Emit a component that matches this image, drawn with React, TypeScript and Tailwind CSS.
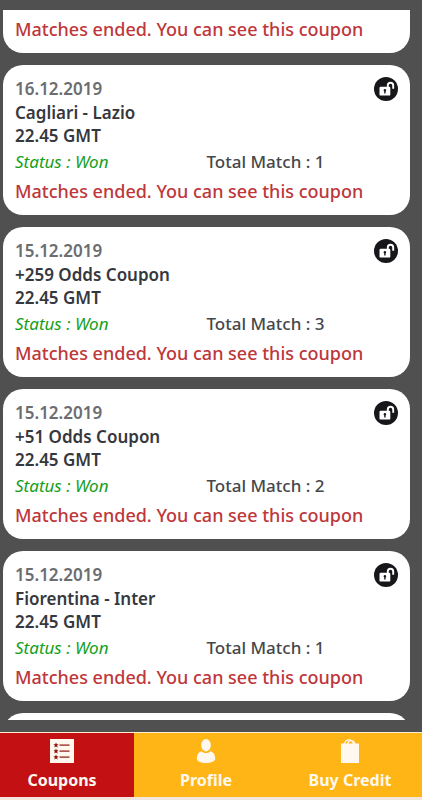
const coupons = [
  { id: 1, date: '16.12.2019', title: 'Cagliari - Lazio', time: '22.45 GMT', total: 1 },
  { id: 2, date: '15.12.2019', title: '+259 Odds Coupon', time: '22.45 GMT', total: 3 },
  { id: 3, date: '15.12.2019', title: '+51 Odds Coupon', time: '22.45 GMT', total: 2 },
  { id: 4, date: '15.12.2019', title: 'Fiorentina - Inter', time: '22.45 GMT', total: 1 },
]

const tabs = [
  { label: 'Coupons', icon: ListIcon, active: true },
  { label: 'Profile', icon: UserIcon, active: false },
  { label: 'Buy Credit', icon: BagIcon, active: false },
]

function ListIcon() {
  return (
    <svg viewBox="0 0 24 24" className="h-6 w-6" aria-hidden="true">
      <path fill="#fff8ee" d="M0 0h24v24H0z" />
      {[6, 12, 18].map((y) => (
        <g key={y} transform={`translate(6 ${y})`} fill="#8e1212">
          <path d="M0-2.6.8-.8l1.8.1L1.2.5l.5 1.9L0 1.4l-1.700 1 .5-1.900L-2.600-.7l1.800-.1z" />
          <path d="M3.500-.5h10v1.200h-10z" />
        </g>
      ))}
    </svg>
  )
}

function UserIcon() {
  return (
    <svg viewBox="0 0 24 24" className="h-6 w-6" fill="#fff8ee" aria-hidden="true">
      <ellipse cx="12" cy="6.200" rx="4.800" ry="6.200" />
      <path d="M7.500 12.200c1.300 1.300 2.800 1.800 4.500 1.800s3.200-.5 4.500-1.800c3.100.8 4.700 3.600 4.700 7.600 0 2.600-4 4.200-9.200 4.200s-9.200-1.600-9.200-4.200c0-4 1.600-6.800 4.700-7.600z" />
    </svg>
  )
}

function BagIcon() {
  return (
    <svg viewBox="0 0 24 24" className="h-6 w-6" aria-hidden="true">
      <path fill="#fff8ee" d="M3 4.500h18V24H3z" />
      <path
        fill="none"
        stroke="#fff8ee"
        strokeWidth="1.300"
        d="M6.500 5C7 2 8.800.8 11 .8S15 2 15.500 5M9.500 5c.5-2.300 1.700-3.400 3.500-3.400s3.500 1.100 4 3.400"
      />
    </svg>
  )
}

function UnlockIcon() {
  return (
    <svg viewBox="0 0 24 24" className="h-6 w-6" aria-hidden="true">
      <circle cx="12" cy="12" r="12" fill="#17171b" />
      <rect x="5.500" y="9.800" width="10.800" height="8.800" rx="1.200" fill="#fff" />
      <path fill="none" stroke="#fff" strokeWidth="1.900" d="M13.800 10.500V8.400a2.700 2.700 0 0 1 5.400 0v3.400" />
      <path fill="#17171b" d="M10.900 12a1.300 1.300 0 0 1 .7 2.400v2h-1.400v-2a1.300 1.300 0 0 1 .7-2.400z" />
    </svg>
  )
}

function EndedMessage() {
  return (
    <p className="text-lg leading-7 font-medium text-[#bd373b]">
      Matches ended. You can see this coupon
    </p>
  )
}

function CouponCard({ coupon }: { coupon: (typeof coupons)[number] }) {
  return (
    <article className="rounded-[20px] bg-white px-3 pt-3 pb-2.5">
      <div className="flex justify-between">
        <div className="text-[17px] leading-[23px] font-semibold text-[#36383d]">
          <p className="leading-6 text-[#6c6d70]">{coupon.date}</p>
          <h2>{coupon.title}</h2>
          <p>{coupon.time}</p>
        </div>
        <button type="button" aria-label="Open coupon" className="h-6 w-6">
          <UnlockIcon />
        </button>
      </div>
      <div className="grid grid-cols-2 text-[17px] leading-[30px]">
        <p className="text-[#15a01a] italic">Status : Won</p>
        <p className="font-medium text-[#45474b]">Total Match : {coupon.total}</p>
      </div>
      <EndedMessage />
    </article>
  )
}

export default function App() {
  return (
    <div className="flex h-screen flex-col overflow-hidden bg-[#505050] font-['Noto_Sans',sans-serif]">
      <main className="mt-2.5 mr-3 mb-3 ml-[3px] min-h-0 flex-1 overflow-hidden">
        <div className="flex flex-col gap-3">
          <article className="rounded-b-[20px] bg-white px-3 pt-[5px] pb-2.5">
            <EndedMessage />
          </article>
          {coupons.map((coupon) => (
            <CouponCard key={coupon.id} coupon={coupon} />
          ))}
          <article className="h-[150px] rounded-[20px] bg-white" />
        </div>
      </main>

      {/* Tab strip runs a little past the left edge */}
      <nav className="-ml-2.5 flex border-t border-b-[3px] border-t-[#fff0d0] border-b-[#f3e6dc] bg-[#ffb515]">
        {tabs.map((tab) => (
          <button
            key={tab.label}
            type="button"
            className={`flex flex-1 flex-col items-center gap-[3px] pt-1.5 pb-[3px] text-base leading-7 font-bold text-[#fff8ee] ${
              tab.active ? 'bg-[#c31012]' : ''
            }`}
          >
            <tab.icon />
            {tab.label}
          </button>
        ))}
      </nav>
    </div>
  )
}
